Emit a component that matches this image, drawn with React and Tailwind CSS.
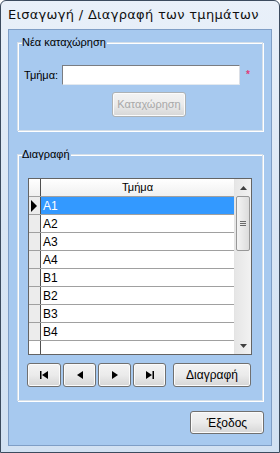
import React from "react";

const rows = ["A1", "A2", "A3", "A4", "B1", "B2", "B3", "B4"];

function NavIcon({ kind }) {
  // small black glyphs for the record navigator
  return (
    <svg width="10" height="8" viewBox="0 0 10 8" className="fill-black">
      {kind === "first" && (
        <>
          <rect x="1" y="0" width="1.5" height="8" />
          <polygon points="9,0 9,8 3,4" />
        </>
      )}
      {kind === "prev" && <polygon points="8,0 8,8 2,4" />}
      {kind === "next" && <polygon points="2,0 2,8 8,4" />}
      {kind === "last" && (
        <>
          <polygon points="1,0 1,8 7,4" />
          <rect x="7.5" y="0" width="1.5" height="8" />
        </>
      )}
    </svg>
  );
}

function WinButton({ className, children, disabled }) {
  return (
    <button
      className={
        "flex items-center justify-center rounded-[3px] border border-[#707070] bg-gradient-to-b from-[#f3f3f3] via-[#ebebeb] to-[#d6d6d6] shadow-[inset_0_0_0_1px_#fbfbfb] " +
        (disabled ? "text-[#a8a8a8] border-[#adb2b5] " : "text-black ") +
        className
      }
    >
      {children}
    </button>
  );
}

function GroupBox({ label, className, children }) {
  return (
    <div
      className={
        "relative border border-[#d5dfe9] shadow-[inset_1px_1px_0_#ffffff,1px_1px_0_#ffffff] " +
        className
      }
    >
      <span className="absolute left-[4px] top-[-7px] bg-[#a7c9ef] pr-[1px] leading-[13px]">
        {label}
      </span>
      {children}
    </div>
  );
}

export default function App() {
  return (
    <div className="flex h-[453px] w-[280px] flex-col rounded-t-[6px] border border-[#3c4b5e] bg-gradient-to-b from-[#e9f0f9] via-[#dae6f4] to-[#d2e1f2] font-['Liberation_Sans',sans-serif] text-[11px] text-black">
      {/* title bar */}
      <div className="flex h-[28px] items-center pl-[7px] font-['DejaVu_Sans',sans-serif] text-[13px] tracking-[0.3px] text-[#101010]">
        Εισαγωγή / Διαγραφή των τμημάτων
      </div>

      {/* client area */}
      <div className="mx-[7px] flex h-[417px] flex-col border border-[#7f9ec6] bg-[#a7c9ef]">
        <GroupBox label="Νέα καταχώρηση" className="ml-[8px] mt-[12px] h-[89px] w-[246px]">
          <div className="mt-[22px] flex h-[20px] items-center">
            <span className="ml-[6px] w-[38px]">Τμήμα:</span>
            <input
              className="h-[20px] w-[178px] border border-[#7a7d82] border-b-[#e3e9ef] border-r-[#dbdfe6] bg-white outline-none"
              defaultValue=""
            />
            <span className="ml-[6px] mt-[-2px] text-[10px] font-bold text-[#e03c78]">*</span>
          </div>
          <WinButton disabled className="ml-[94px] mt-[7px] h-[25px] w-[74px]">
            Καταχώρηση
          </WinButton>
        </GroupBox>

        <GroupBox label="Διαγραφή" className="ml-[8px] mt-[23px] h-[247px] w-[246px]">
          {/* data grid */}
          <div className="ml-[10px] mt-[23px] flex h-[177px] w-[224px] border border-[#646464] bg-white">
            <div className="flex w-[205px] flex-col">
              <div className="flex h-[18px] border-b border-[#a0a0a0] bg-gradient-to-b from-white to-[#f0f0f0]">
                <div className="w-[12px] border-r border-[#505050]" />
                <div className="flex flex-1 items-center justify-center">Τμήμα</div>
              </div>
              {rows.map((r, i) => (
                <div key={r} className="flex h-[18px] border-b border-[#a0a0a0]">
                  <div className="flex w-[12px] items-center border-r border-[#505050] bg-[#ececec]">
                    {i === 0 && (
                      <svg width="8" height="12" viewBox="0 0 8 12" className="ml-[1px] fill-black">
                        <polygon points="1,0 1,12 7,6" />
                      </svg>
                    )}
                  </div>
                  <div
                    className={
                      "flex flex-1 items-center pl-[2px] text-[12px] " +
                      (i === 0 ? "bg-[#3399ff] text-white" : "")
                    }
                  >
                    {r}
                  </div>
                </div>
              ))}
              <div className="flex flex-1">
                <div className="w-[12px] border-r border-[#505050]" />
              </div>
            </div>

            {/* scrollbar */}
            <div className="flex w-[17px] flex-col border-l border-[#e4e4e4] bg-gradient-to-r from-[#e6e6e6] to-[#f2f2f2]">
              <div className="flex h-[17px] items-center justify-center">
                <svg width="7" height="4" viewBox="0 0 7 4" className="fill-[#404040]">
                  <polygon points="0,4 7,4 3.5,0" />
                </svg>
              </div>
              <div className="mx-[1px] flex h-[55px] flex-col items-center justify-center gap-[1px] rounded-[2px] border border-[#979797] bg-gradient-to-r from-[#f4f4f4] to-[#dcdcdc]">
                <div className="h-[1px] w-[6px] bg-[#6a6a6a]" />
                <div className="h-[1px] w-[6px] bg-[#6a6a6a]" />
                <div className="h-[1px] w-[6px] bg-[#6a6a6a]" />
              </div>
              <div className="flex-1" />
              <div className="flex h-[17px] items-center justify-center">
                <svg width="7" height="4" viewBox="0 0 7 4" className="fill-[#404040]">
                  <polygon points="0,0 7,0 3.5,4" />
                </svg>
              </div>
            </div>
          </div>

          {/* navigator */}
          <div className="ml-[9px] mt-[8px] flex h-[24px] items-center gap-[2px]">
            <WinButton className="h-[24px] w-[34px]">
              <NavIcon kind="first" />
            </WinButton>
            <WinButton className="h-[24px] w-[33px]">
              <NavIcon kind="prev" />
            </WinButton>
            <WinButton className="h-[24px] w-[33px]">
              <NavIcon kind="next" />
            </WinButton>
            <WinButton className="h-[24px] w-[33px]">
              <NavIcon kind="last" />
            </WinButton>
            <WinButton className="ml-[5px] h-[24px] w-[78px] text-[12px]">Διαγραφή</WinButton>
          </div>
        </GroupBox>

        <div className="mr-[7px] mt-[10px] flex justify-end">
          <WinButton className="h-[23px] w-[74px] text-[12px]">Έξοδος</WinButton>
        </div>
      </div>
    </div>
  );
}
